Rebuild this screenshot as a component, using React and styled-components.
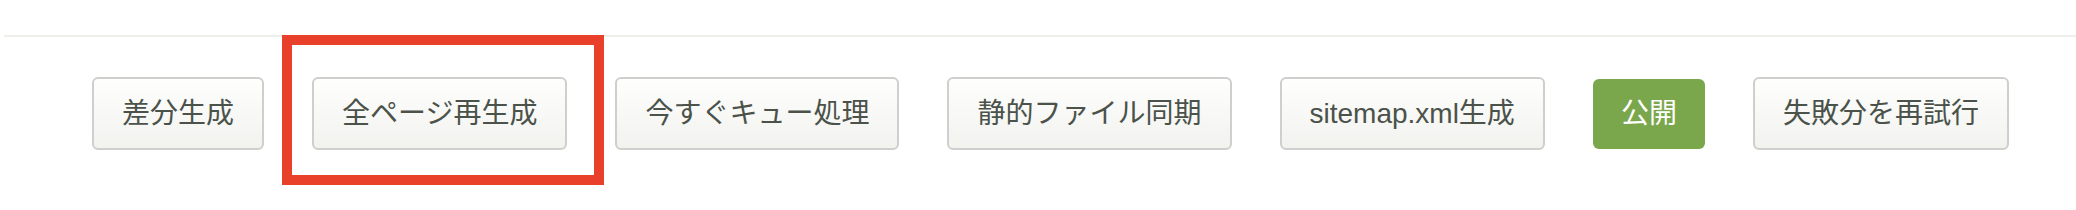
import React from "react";
import styled, { createGlobalStyle } from "styled-components";

const GlobalStyle = createGlobalStyle`
  body {
    margin: 0;
    background: #fff;
    font-family: "Liberation Sans", "Noto Sans CJK JP", sans-serif;
  }
`;

const actions = [
  { label: "差分生成" },
  { label: "全ページ再生成", highlighted: true },
  { label: "今すぐキュー処理" },
  { label: "静的ファイル同期" },
  { label: "sitemap.xml生成" },
  { label: "公開", primary: true },
  { label: "失敗分を再試行" },
];

const App = () => {
  return (
    <Page>
      <GlobalStyle />
      <Divider />
      <Toolbar>
        {actions.map(action =>
          action.highlighted ? (
            <Highlighted key={action.label}>
              <Button>{action.label}</Button>
              <Marker />
            </Highlighted>
          ) : (
            <Button key={action.label} $primary={action.primary}>
              {action.label}
            </Button>
          )
        )}
      </Toolbar>
    </Page>
  );
};

const Page = styled.div`
  width: 2076px;
  height: 210px;
  padding-top: 35px;
  box-sizing: border-box;
`;

const Divider = styled.div`
  margin-left: 4px;
  border-top: 2px solid #eeeeea;
`;

const Toolbar = styled.div`
  display: flex;
  align-items: center;
  gap: 48px;
  padding: 40px 0 0 92px;
`;

const Button = styled.button`
  display: inline-flex;
  align-items: center;
  justify-content: center;
  box-sizing: border-box;
  height: ${props => (props.$primary ? "70px" : "73px")};
  padding: 0 28px;
  font-family: "Liberation Sans", "Noto Sans CJK JP", sans-serif;
  font-size: 28px;
  line-height: 1;
  white-space: nowrap;
  color: ${props => (props.$primary ? "#fff" : "#4a524a")};
  background: ${props =>
    props.$primary ? "#7aa74b" : "linear-gradient(#fefefd, #f2f2ef)"};
  border: ${props => (props.$primary ? "none" : "2px solid #cfcfcd")};
  border-radius: 6px;
  cursor: pointer;
`;

const Highlighted = styled.span`
  position: relative;
  display: inline-flex;
`;

const Marker = styled.span`
  position: absolute;
  top: -42px;
  left: -30px;
  right: -37px;
  bottom: -35px;
  border: 10px solid #e8402a;
  pointer-events: none;
`;

export default App;
